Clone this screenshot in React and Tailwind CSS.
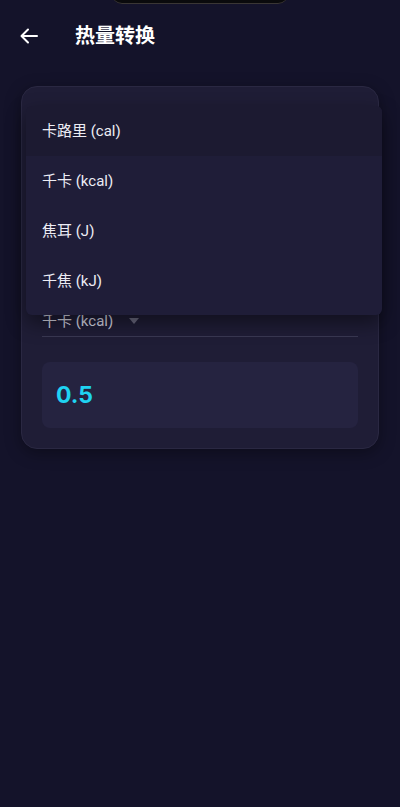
import React from "react";

const units = ["卡路里 (cal)", "千卡 (kcal)", "焦耳 (J)", "千焦 (kJ)"];

export default function App() {
  return (
    <div
      className="relative w-[400px] h-[807px] overflow-hidden bg-[#14132a] text-white"
      style={{ fontFamily: '"Roboto", "Noto Sans CJK SC", sans-serif' }}
    >
      {/* notch */}
      <div className="absolute left-[112px] top-[-6px] w-[176px] h-[10px] rounded-b-[10px] bg-[#0a0a0c] border-b border-[#3a3634]" />

      <div className="flex items-center h-[72px] px-5">
        <svg width="18" height="16" viewBox="0 0 18 16" fill="none" stroke="white" strokeWidth="2" strokeLinecap="round" strokeLinejoin="round">
          <path d="M17 8H2" />
          <path d="M8 1.5L1.5 8L8 14.5" />
        </svg>
        <h1 className="ml-[37px] text-[20px] font-bold">热量转换</h1>
      </div>

      <div className="relative mx-[21px] mt-[14px] rounded-2xl bg-[#1f1d36] border border-[#2a2842] shadow-[0_4px_16px_rgba(0,0,0,0.35)] px-[20px] pt-[200px] pb-[20px]">
        <div className="flex items-center h-[48px] pt-[20px] text-[15px] text-[#d8d8e4]">
          <span>千卡 (kcal)</span>
          <svg className="ml-[16px]" width="10" height="6" viewBox="0 0 10 6">
            <path d="M0 0H10L5 6Z" fill="#6b6a80" />
          </svg>
        </div>
        <div className="h-px bg-[#3a3852] mt-[1px]" />
        <div className="mt-[25px] h-[66px] rounded-lg bg-[#252340] flex items-center px-[14px]">
          <span className="text-[23px] font-bold text-[#1fd3f2]" style={{ fontFamily: '"Inter", sans-serif' }}>0.5</span>
        </div>

        <div className="absolute left-[4px] right-[-4px] top-[19px] pb-[9px] rounded-md bg-[#1f1d38] shadow-[0_8px_20px_rgba(0,0,0,0.45)] overflow-hidden">
          {units.map((u, i) => (
            <div
              key={u}
              className={
                "h-[50px] flex items-center pl-[16px] text-[15px] text-[#ececf4] " +
                (i === 0 ? "bg-[#1c1a31]" : "")
              }
            >
              {u}
            </div>
          ))}
        </div>
      </div>
    </div>
  );
}
